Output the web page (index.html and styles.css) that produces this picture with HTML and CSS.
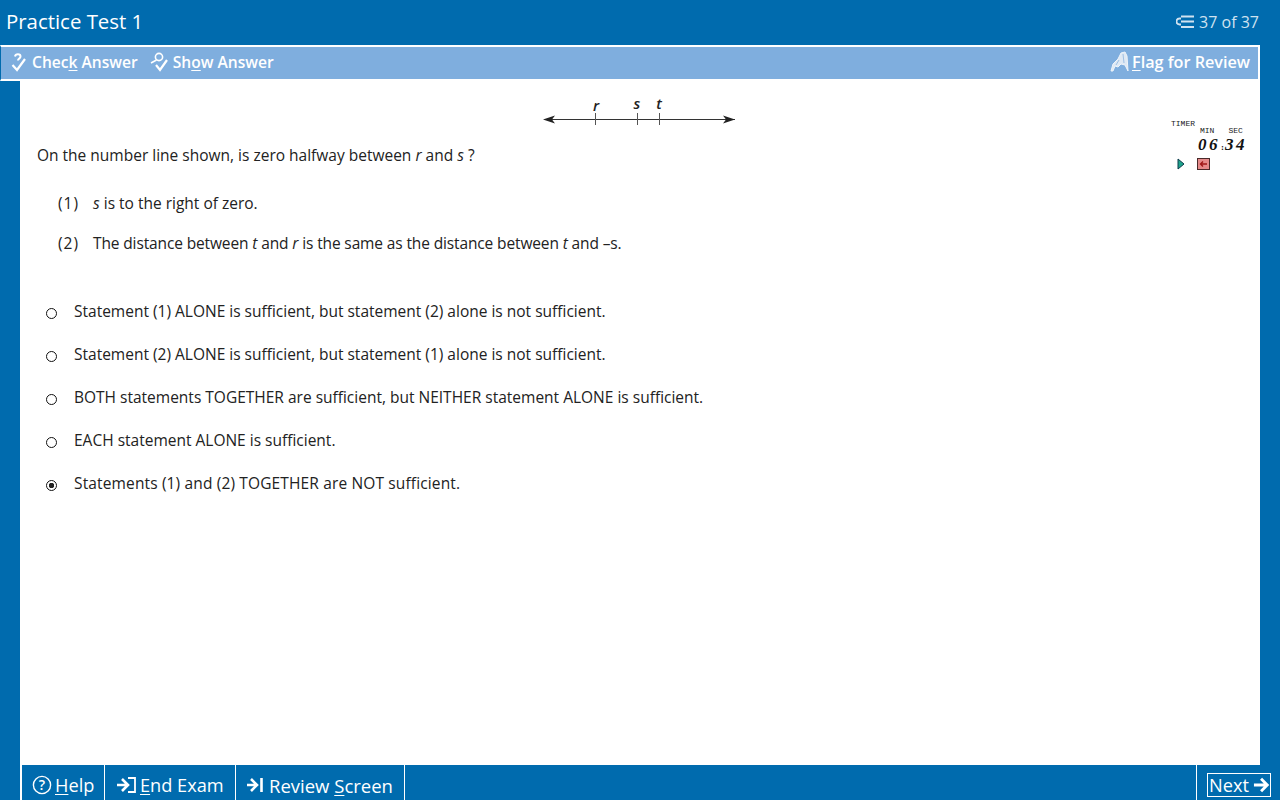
FILE: index.html
```html
<!DOCTYPE html>
<html lang="en">
<head>
    <meta charset="UTF-8">
    <meta name="viewport" content="width=device-width, initial-scale=1.0">
    <title>Practice Test 1</title>
    <link rel="stylesheet" href="styles.css">
</head>
<body>
    <header class="title-bar">
        <h1>Practice Test 1</h1>
        <div class="progress">
            <svg class="progress-icon" width="20" height="14" viewBox="0 0 20 14">
                <path d="M5 1.5H18M5 6.5H18M5 12H18M5 3.5H3.5a2.5 2.5 0 0 0 0 6H5" fill="none" stroke="#cfe2f0" stroke-width="1.8"/>
            </svg>
            <span>37 of 37</span>
        </div>
    </header>

    <div class="tool-row">
        <nav class="tool-bar">
            <a class="tool">
                <svg width="18" height="20" viewBox="0 0 18 20">
                    <path d="M4 4.5C4.5 1.5 9.5 1.5 9.5 4.5 9.5 6.5 7 6.5 7 8.5" fill="none" stroke="#fff" stroke-width="2"/>
                    <path d="M1.5 13l4.5 5 8-11" fill="none" stroke="#fff" stroke-width="2.2"/>
                </svg>
                <span>Chec<u>k</u> Answer</span>
            </a>
            <a class="tool">
                <svg width="20" height="20" viewBox="0 0 20 20">
                    <circle cx="9" cy="5" r="3.6" fill="none" stroke="#fff" stroke-width="1.6"/>
                    <path d="M6.5 8L1 11" fill="none" stroke="#fff" stroke-width="1.6"/>
                    <path d="M6 13l4 5 7-10" fill="none" stroke="#fff" stroke-width="2.2"/>
                </svg>
                <span>Sh<u>o</u>w Answer</span>
            </a>
            <a class="tool tool-flag">
                <svg width="19" height="22" viewBox="0 0 19 22">
                    <path d="M1 20L3 13 8 8 11 2 15 1 17 5 18 20 15 14 11 13 8 16 5 15 3 20Z" fill="#dfe9f4" stroke="#eef4fa" stroke-width="1"/>
                    <path d="M13 3L14 12M9 9L6 14" fill="none" stroke="#9dbfe4" stroke-width="1"/>
                </svg>
                <span><u>F</u>lag for Review</span>
            </a>
        </nav>
        <div class="side"></div>
    </div>

    <div class="middle">
        <div class="side"></div>
        <main class="content">
            <div class="timer">
                <div class="timer-label">TIMER</div>
                <div class="timer-units"><span>MIN</span><span>SEC</span></div>
                <div class="timer-digits">06<small>:</small>34</div>
                <div class="timer-buttons">
                    <svg width="8" height="12" viewBox="0 0 8 12"><path d="M1 1L7 6 1 11Z" fill="#1fa58c" stroke="#0b3b4a"/></svg>
                    <svg width="13" height="12" viewBox="0 0 13 12">
                        <rect x="0.5" y="0.5" width="12" height="11" fill="#e58a8a" stroke="#4a2a2a"/>
                        <path d="M10 6H4M6 3.5L3.5 6 6 8.5" fill="none" stroke="#a01818" stroke-width="1.4"/>
                    </svg>
                </div>
            </div>

            <svg class="number-line" width="196" height="44" viewBox="0 -8 196 44">
                <path d="M3 22.5H193" stroke="#333" stroke-width="1"/>
                <path d="M1 22.5L13 18.5 10 22.5 13 26.5Z M193 22.5L181 18.5 184 22.5 181 26.5Z" fill="#222"/>
                <path d="M53.5 16V28M95.5 16V28M117.5 16V28" stroke="#555" stroke-width="1"/>
                <text x="54" y="14">r</text>
                <text x="95" y="12">s</text>
                <text x="117" y="12">t</text>
            </svg>

            <p class="question">On the number line shown, is zero halfway between <i>r</i> and <i>s</i> ?</p>

            <div class="statements">
                <div class="statement"><span class="num">(1)</span><span><i>s</i> is to the right of zero.</span></div>
                <div class="statement"><span class="num">(2)</span><span class="tight">The distance between <i>t</i> and <i>r</i> is the same as the distance between <i>t</i> and &ndash;s.</span></div>
            </div>

            <div class="options">
                <div class="option"><span class="radio"></span><span>Statement (1) ALONE is sufficient, but statement (2) alone is not sufficient.</span></div>
                <div class="option"><span class="radio"></span><span>Statement (2) ALONE is sufficient, but statement (1) alone is not sufficient.</span></div>
                <div class="option"><span class="radio"></span><span>BOTH statements TOGETHER are sufficient, but NEITHER statement ALONE is sufficient.</span></div>
                <div class="option"><span class="radio"></span><span>EACH statement ALONE is sufficient.</span></div>
                <div class="option"><span class="radio selected"></span><span class="wide">Statements (1) and (2) TOGETHER are NOT sufficient.</span></div>
            </div>
        </main>
        <div class="side"></div>
    </div>

    <footer class="foot">
        <div class="foot-left"></div>
        <div class="foot-bar">
            <a class="foot-btn btn-help">
                <svg width="20" height="20" viewBox="0 0 20 20">
                    <circle cx="10" cy="10" r="8.6" fill="none" stroke="#fff" stroke-width="1.4"/>
                    <text x="10" y="15" class="icon-q">?</text>
                </svg>
                <span><u>H</u>elp</span>
            </a>
            <a class="foot-btn btn-end">
                <svg width="20" height="18" viewBox="0 0 20 18">
                    <path d="M0 9H10M5 3L11 9 5 15" fill="none" stroke="#fff" stroke-width="2.6"/>
                    <path d="M11 2H18V16H11" fill="none" stroke="#fff" stroke-width="1.8"/>
                </svg>
                <span><u>E</u>nd Exam</span>
            </a>
            <a class="foot-btn btn-review">
                <svg width="18" height="18" viewBox="0 0 18 18">
                    <path d="M1 9H10M5 3L11 9 5 15" fill="none" stroke="#fff" stroke-width="2.6"/>
                    <path d="M15.5 2V16" fill="none" stroke="#fff" stroke-width="2.6"/>
                </svg>
                <span>Review <u>S</u>creen</span>
            </a>
            <div class="foot-space"></div>
            <a class="btn-next">
                <span class="next-box">
                    <span>Next</span>
                    <svg width="18" height="18" viewBox="0 0 18 18">
                        <path d="M1 9H15M8.5 2.5L15 9 8.5 15.5" fill="none" stroke="#fff" stroke-width="3"/>
                    </svg>
                </span>
            </a>
        </div>
    </footer>
</body>
</html>
```

FILE: styles.css
```css
* {
    box-sizing: border-box;
}
html, body {
    height: 100%;
}
body {
    margin: 0;
    height: 800px;
    overflow: hidden;
    display: flex;
    flex-direction: column;
    font-family: "Open Sans", "Noto Sans", Arial, sans-serif;
    font-size: 15.5px;
    color: #222;
    background-color: #fff;
}
u {
    text-underline-offset: 2px;
}

/* top bar */
.title-bar {
    height: 45px;
    flex: none;
    display: flex;
    justify-content: space-between;
    align-items: center;
    padding: 0 21px 1px 6px;
    background-color: #006bae;
    color: #fff;
}
.title-bar h1 {
    margin: 0 0 2px;
    font-size: 20.4px;
    font-weight: 400;
}
.progress {
    display: flex;
    align-items: center;
    gap: 3px;
    font-size: 16px;
    color: #cfe2f0;
}

/* toolbar */
.tool-row {
    height: 36px;
    flex: none;
    display: flex;
}
.tool-bar {
    flex: 1;
    display: flex;
    align-items: center;
    gap: 12px;
    padding: 0 8px 2px 10px;
    border-left: 1px solid #006bae;
    border-top: 2px solid #fff;
    border-bottom: 2px solid #fff;
    border-right: 2px solid #fff;
    background-color: #7faede;
    color: #fff;
    font-size: 15.6px;
    font-weight: 600;
}
.tool {
    display: flex;
    align-items: center;
    gap: 3px;
}
.tool-flag {
    margin-left: auto;
    font-size: 16.2px;
}

/* middle */
.middle {
    flex: 1;
    display: flex;
}
.side {
    width: 20px;
    flex: none;
    background-color: #006bae;
}
.content {
    flex: 1;
    position: relative;
    padding: 8px 17px 0;
}
.number-line {
    display: block;
    margin: 0 auto;
}
.number-line text {
    font-family: "Open Sans", Arial, sans-serif;
    font-size: 15px;
    font-style: italic;
    font-weight: 600;
    text-anchor: middle;
    fill: #222;
}
.question {
    margin: 11px 0 0;
    line-height: 22px;
}
.statements {
    display: flex;
    flex-direction: column;
    gap: 18px;
    margin-top: 26px;
    padding-left: 21px;
}
.statement {
    display: flex;
    line-height: 22px;
}
.num {
    width: 35px;
    flex: none;
    letter-spacing: 1px;
}
.tight {
    letter-spacing: -0.13px;
}
.wide {
    letter-spacing: 0.14px;
}
.options {
    display: flex;
    flex-direction: column;
    gap: 21px;
    margin-top: 46px;
    padding-left: 9px;
}
.option {
    display: flex;
    align-items: center;
    gap: 17px;
    line-height: 22px;
}
.radio {
    width: 11px;
    height: 11px;
    flex: none;
    margin-top: 5px;
    border: 1.6px solid #111;
    border-radius: 50%;
    background-color: #fff;
}
.radio.selected {
    border-width: 1.5px;
    background: radial-gradient(circle, #222 0 2.5px, #fff 3px);
}

/* timer */
.timer {
    position: absolute;
    top: 39px;
    right: 14px;
    width: 75px;
    font-family: "Liberation Mono", monospace;
    color: #222;
    font-size: 8px;
    line-height: 8px;
}
.timer-units {
    display: flex;
    gap: 14px;
    margin-top: -1.5px;
    padding-left: 29px;
}
.timer-digits {
    padding-left: 27px;
    font-family: "Liberation Serif", serif;
    font-size: 17px;
    font-style: italic;
    font-weight: 700;
    line-height: 19px;
    letter-spacing: 2.5px;
    color: #111;
}
.timer-digits small {
    font-size: 9px;
    font-style: normal;
    margin: 0 1px;
    letter-spacing: 0;
}
.timer-buttons {
    display: flex;
    align-items: center;
    gap: 12px;
    padding-left: 6px;
    margin-top: 1.5px;
}

/* footer */
.foot {
    height: 35px;
    flex: none;
    display: flex;
}
.foot-left {
    width: 22px;
    background: linear-gradient(to right, #006bae 20px, #fff 20px);
}
.foot-bar {
    flex: 1;
    display: flex;
    background-color: #006bae;
    color: #fff;
    font-size: 18.2px;
}
.foot-btn {
    display: flex;
    align-items: center;
    gap: 3px;
    padding-top: 7px;
    padding-bottom: 2px;
    border-right: 1px solid #fff;
}
.btn-help {
    width: 83px;
    padding-left: 10px;
    gap: 3px;
}
.btn-end {
    width: 131px;
    padding-left: 11px;
    border-left: 1px solid #006bae;
}
.btn-review {
    width: 169px;
    padding-left: 10px;
    gap: 5px;
    font-size: 18.5px;
}
.foot-space {
    flex: 1;
    border-right: 1px solid #fff;
}
.btn-next {
    width: 83px;
    padding: 8px 0 0 10px;
}
.next-box {
    display: flex;
    align-items: center;
    gap: 4px;
    width: 64px;
    height: 24px;
    padding-left: 1px;
    border: 1px solid #fff;
}
.icon-q {
    font-family: "Open Sans", Arial, sans-serif;
    font-size: 14px;
    font-weight: 600;
    text-anchor: middle;
    fill: #fff;
}
```
